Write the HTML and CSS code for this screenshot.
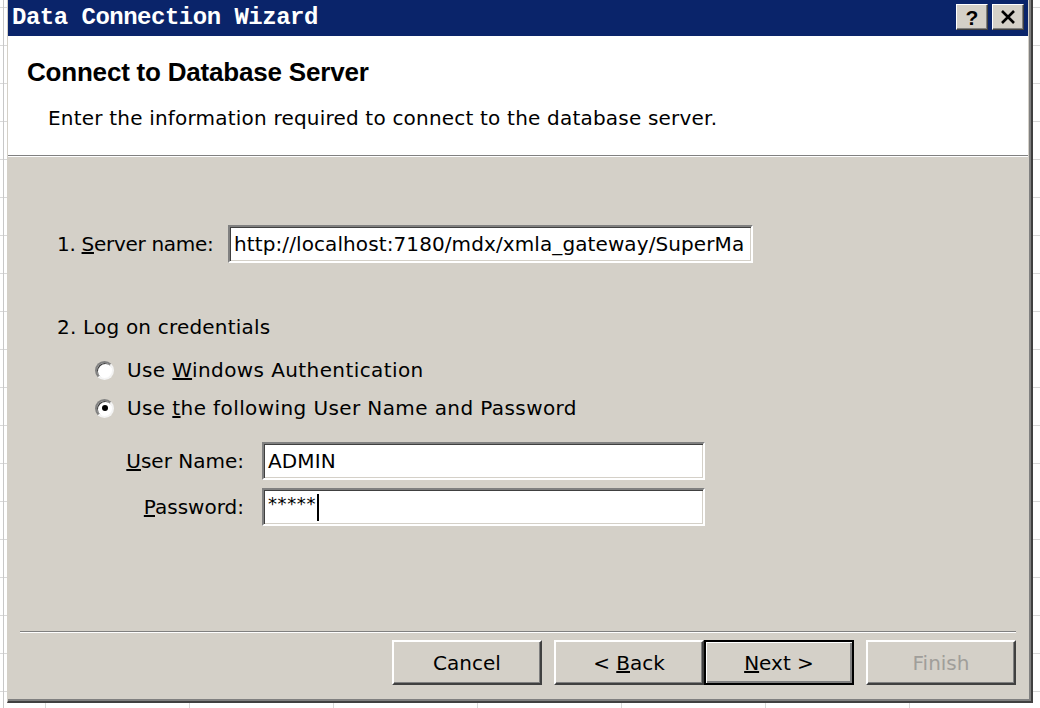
FILE: index.html
```html
<!DOCTYPE html>
<html>
<head>
<meta charset="utf-8">
<link rel="stylesheet" href="styles.css">
</head>
<body>
<div class="dialog">
  <div class="titlebar">
    <span class="title">Data Connection Wizard</span>
    <div class="tb-btns">
      <div class="tbb help">?</div>
      <div class="tbb close">
        <svg width="16" height="14" viewBox="0 0 16 14"><path d="M2 1 L14 13 M14 1 L2 13" stroke="#000" stroke-width="2.6" fill="none"/></svg>
      </div>
    </div>
  </div>
  <div class="header">
    <h1 class="h-title">Connect to Database Server</h1>
    <p class="h-desc">Enter the information required to connect to the database server.</p>
  </div>
  <div class="hsep"></div>
  <div class="main">
    <div class="server-row">
      <span class="server-label">1. <u>S</u>erver name:</span>
      <div class="field server-field">http://localhost:7180/mdx/xmla_gateway/SuperMa</div>
    </div>
    <div class="creds">2. Log on credentials</div>
    <div class="radio-row first"><span class="rb"></span><span>Use <u>W</u>indows Authentication</span></div>
    <div class="radio-row"><span class="rb on"><span class="dot"></span></span><span>Use <u>t</u>he following User Name and Password</span></div>
    <div class="user-row first">
      <span class="user-label"><u>U</u>ser Name:</span>
      <div class="field user-field">ADMIN</div>
    </div>
    <div class="user-row">
      <span class="user-label"><u>P</u>assword:</span>
      <div class="field user-field"><span class="stars">*****</span><span class="caret"></span></div>
    </div>
  </div>
  <div class="footer">
    <div class="fsep"></div>
    <div class="btn-row">
      <div class="btn cancel">Cancel</div>
      <div class="btn back">&lt;&nbsp;<u>B</u>ack</div>
      <div class="btn next default"><u>N</u>ext&nbsp;&gt;</div>
      <div class="btn finish disabled">Finish</div>
    </div>
  </div>
</div>
</body>
</html>
```
FILE: styles.css
```css
html, body {
  margin: 0;
  padding: 0;
}
body {
  width: 1040px;
  height: 708px;
  overflow: hidden;
  font-family: "DejaVu Sans", Verdana, sans-serif;
  color: #000;
  background-color: #fff;
  background-image:
    linear-gradient(to right, transparent 3px, #c8c8c8 3px, #c8c8c8 4px, transparent 4px),
    repeating-linear-gradient(to bottom, transparent 0, transparent 7px, #d9d9d9 7px, #d9d9d9 8px, transparent 8px, transparent 38px),
    repeating-linear-gradient(to right, transparent 0, transparent 45px, #d9d9d9 45px, #d9d9d9 46px, transparent 46px, transparent 144px);
}
.dialog {
  margin-left: 7px;
  width: 1026px;
  height: 703px;
  box-sizing: border-box;
  background: #d4d0c8;
  border-left: 1px solid #d4d0c8;
  border-right: 2px solid #404040;
  border-bottom: 2px solid #404040;
  padding: 0 3px 3px 0;
  box-shadow: inset -2px -2px 0 #808080;
  display: flex;
  flex-direction: column;
}
.titlebar {
  height: 36px;
  flex: none;
  background: #0a246a;
  display: flex;
  align-items: center;
  justify-content: space-between;
  padding: 0 4px;
}
.title {
  font-family: "Liberation Mono", "Courier New", monospace;
  font-weight: bold;
  font-size: 24px;
  letter-spacing: -0.5px;
  color: #fff;
  margin-top: -1px;
}
.tb-btns {
  display: flex;
  gap: 4px;
  margin-top: -2px;
}
.tbb {
  width: 32px;
  height: 26px;
  box-sizing: border-box;
  background: #d4d0c8;
  border: 1px solid;
  border-color: #fff #404040 #404040 #fff;
  box-shadow: inset -1px -1px 0 #808080;
  display: flex;
  align-items: center;
  justify-content: center;
}
.help {
  font-family: "Liberation Sans", Arial, sans-serif;
  font-weight: bold;
  font-size: 21px;
  line-height: 1;
}
.header {
  height: 119px;
  flex: none;
  box-sizing: border-box;
  background: #fff;
  padding: 21px 0 0 19px;
}
.h-title {
  margin: 0;
  font-family: "Liberation Sans", Arial, sans-serif;
  font-size: 26px;
  font-weight: bold;
  line-height: 30px;
  letter-spacing: -0.2px;
}
.h-desc {
  margin: 19px 0 0 21px;
  font-size: 20px;
  line-height: 24px;
  letter-spacing: 0.2px;
}
.hsep {
  height: 1px;
  flex: none;
  background: #808080;
  border-bottom: 1px solid #fff;
}
.main {
  flex: 1;
  display: flex;
  flex-direction: column;
  padding-left: 49px;
  font-size: 20px;
  letter-spacing: 0.2px;
}
.server-row {
  margin-top: 68px;
  display: flex;
  align-items: center;
}
.server-label {
  width: 171px;
  flex: none;
  letter-spacing: -0.3px;
}
.field {
  height: 38px;
  box-sizing: border-box;
  background: #fff;
  border: 2px solid;
  border-color: #808080 #fff #fff #808080;
  box-shadow: inset 1px 1px 0 #404040, inset -1px -1px 0 #d4d0c8;
  padding: 0 4px;
  line-height: 34px;
  white-space: nowrap;
  overflow: hidden;
  letter-spacing: 0.1px;
}
.server-field {
  width: 525px;
}
.creds {
  margin-top: 52px;
  line-height: 24px;
}
.radio-row {
  height: 38px;
  display: flex;
  align-items: center;
  padding-left: 38px;
  letter-spacing: 0.4px;
}
.radio-row.first {
  margin-top: 12px;
}
.rb {
  width: 19px;
  height: 19px;
  box-sizing: border-box;
  border-radius: 50%;
  background: #fff;
  border: 2px solid;
  border-color: #808080 #f4f4f4 #f4f4f4 #808080;
  box-shadow: inset 1px 1px 0 #404040;
  margin-right: 13px;
  display: flex;
  align-items: center;
  justify-content: center;
}
.dot {
  width: 6px;
  height: 6px;
  border-radius: 50%;
  background: #000;
}
.user-row {
  display: flex;
  align-items: center;
  margin-top: 8px;
}
.user-row.first {
  margin-top: 15px;
}
.user-label {
  width: 187px;
  text-align: right;
  margin-right: 18px;
  flex: none;
  letter-spacing: 0;
}
.user-field {
  width: 443px;
  display: flex;
  align-items: center;
}
.stars {
  font-size: 18px;
  line-height: 18px;
  letter-spacing: 0.6px;
  align-self: flex-start;
  margin-top: 5px;
}
.caret {
  width: 2px;
  height: 27px;
  background: #000;
  margin-left: 1px;
}
.footer {
  flex: none;
}
.fsep {
  margin: 0 12px;
  height: 1px;
  background: #808080;
  border-bottom: 1px solid #fff;
}
.btn-row {
  display: flex;
  justify-content: flex-end;
  padding: 7px 12px 13px;
}
.btn {
  width: 150px;
  height: 45px;
  box-sizing: border-box;
  background: #d4d0c8;
  border: 2px solid;
  border-color: #fff #404040 #404040 #fff;
  box-shadow: inset -1px -1px 0 #808080;
  font-size: 20px;
  display: flex;
  align-items: center;
  justify-content: center;
}
.cancel {
  margin-right: 12px;
}
.next {
  margin-right: 12px;
}
.btn.default {
  border: 2px solid #000;
  box-shadow: inset 1px 1px 0 #fff, inset -2px -2px 0 #808080;
}
.btn.disabled {
  color: #a09e9a;
}
```
